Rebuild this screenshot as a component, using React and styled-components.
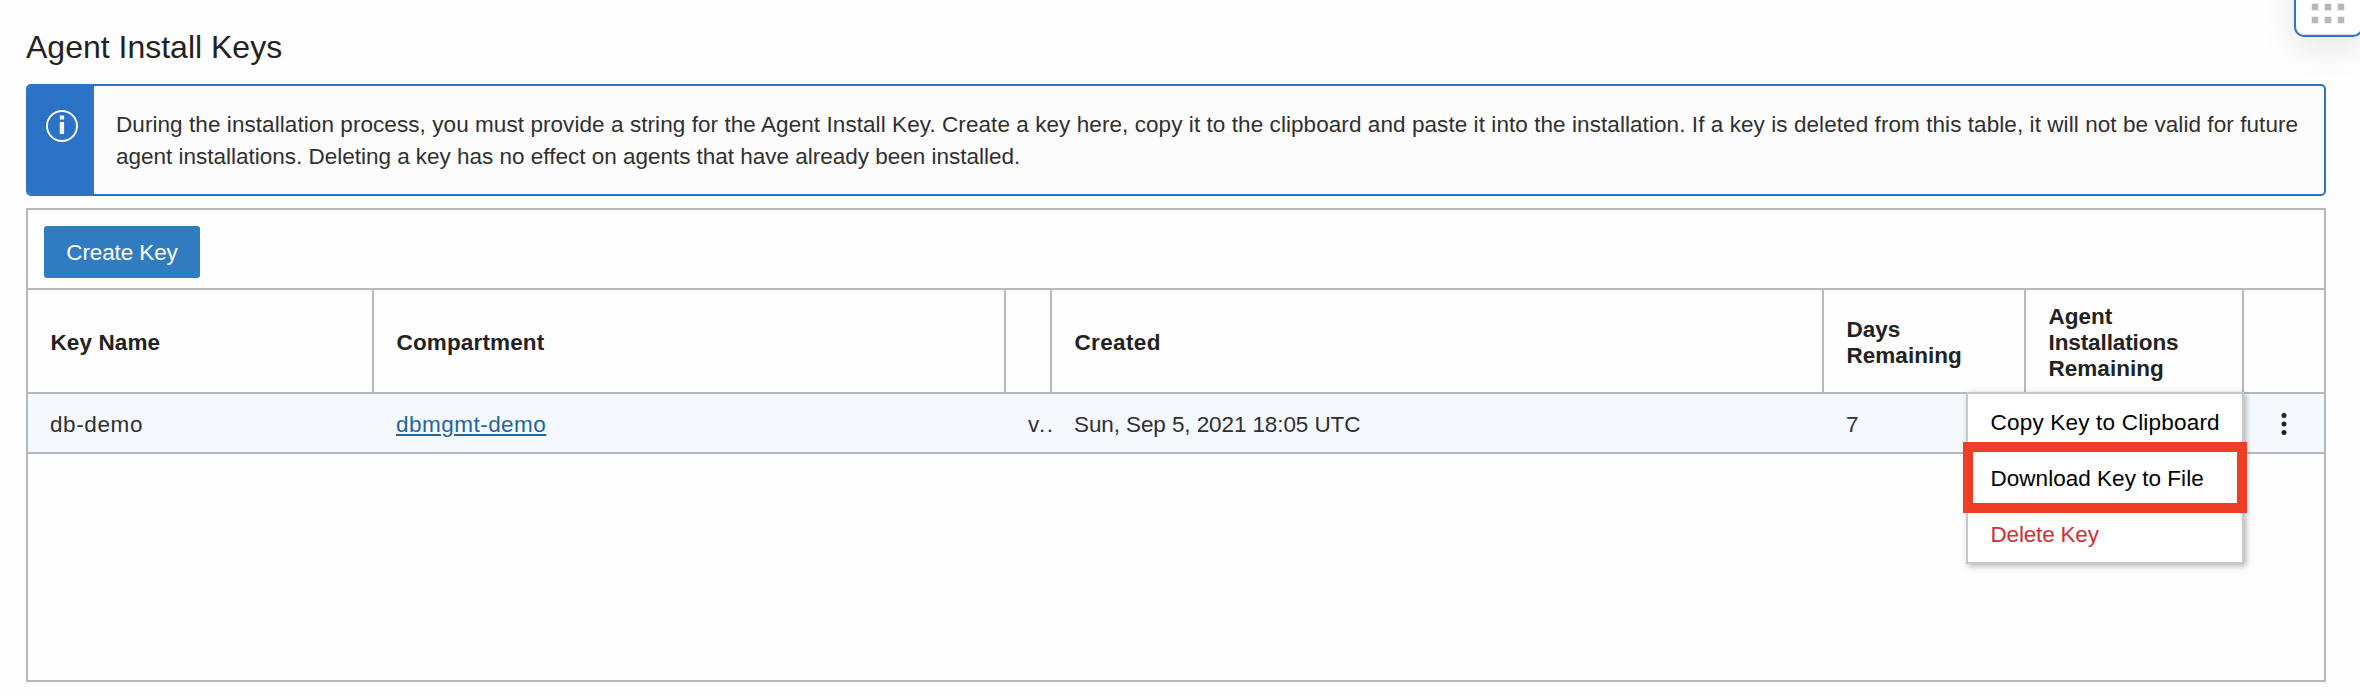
import React from "react";
import styled, { createGlobalStyle } from "styled-components";

const colors = {
  line: "#b4b9c0",
  info: "#2c72c7",
  button: "#317cc1",
  heading: "#222222",
  text: "#303030",
  link: "#2464a0",
  danger: "#d12f33",
  highlight: "#ee3e25",
};

const COLUMNS = "346px 632px 46px 772px 202px 218px 80px";

const GlobalStyle = createGlobalStyle`
  * { box-sizing: border-box; }
  body {
    margin: 0;
    background: #fefefe;
    color: ${colors.text};
    font: 22.5px/32px "Liberation Sans", Arial, sans-serif;
    overflow: hidden;
  }
`;

const Page = styled.main`
  position: relative;
  width: 2360px;
  height: 698px;
  padding: 27px 34px 0 26px;
  overflow: hidden;
`;

const Title = styled.h1`
  margin: 0 0 17px;
  color: ${colors.heading};
  font-size: 32px;
  font-weight: 400;
  line-height: 40px;
`;

const Track = styled.span`
  letter-spacing: ${(p) => p.$spacing || 0}px;
  white-space: nowrap;
`;

const Banner = styled.section`
  display: flex;
  height: 112px;
  margin-bottom: 12px;
  border: 2px solid ${colors.info};
  border-radius: 5px;
  background: #fcfcfc;
  overflow: hidden;
`;

const BannerIcon = styled.div`
  display: flex;
  flex: 0 0 66px;
  justify-content: center;
  padding: 24px 0 0 2px;
  background: ${colors.info};

  svg {
    display: block;
    width: 32px;
    height: 32px;
  }
`;

const BannerText = styled.p`
  display: flex;
  flex-direction: column;
  margin: 0;
  padding: 23px 0 0 22px;
`;

const Panel = styled.section`
  height: 474px;
  border: 2px solid ${colors.line};
`;

const Toolbar = styled.div`
  display: flex;
  height: 80px;
  padding: 16px;
  border-bottom: 2px solid ${colors.line};
`;

const PrimaryButton = styled.button`
  width: 156px;
  height: 52px;
  padding: 1px 0 0;
  border: 0;
  border-radius: 3px;
  background: ${colors.button};
  color: #fff;
  font: inherit;
`;

const HeaderRow = styled.div`
  display: grid;
  grid-template-columns: ${COLUMNS};
  height: 104px;
  border-bottom: 2px solid ${colors.line};
`;

const HeaderCell = styled.div`
  display: flex;
  flex-direction: column;
  justify-content: center;
  padding: 3px 0 0 22.5px;
  border-right: 2px solid ${colors.line};
  color: ${colors.heading};
  font-weight: 700;
  line-height: 26px;

  &:last-child {
    border-right: 0;
  }
`;

const BodyRow = styled.div`
  display: grid;
  grid-template-columns: ${COLUMNS};
  height: 60px;
  border-bottom: 2px solid ${colors.line};
  background: #f5f9fe;
`;

const Cell = styled.div`
  display: flex;
  align-items: center;
  padding: 3px 0 0 22px;
`;

const CompartmentLink = styled.a`
  color: ${colors.link};
  letter-spacing: 0.48px;
  text-decoration: underline;
  text-decoration-thickness: 2px;
  text-underline-offset: 2px;
`;

const ActionsCell = styled.div`
  position: relative;
  display: flex;
  align-items: center;
  justify-content: center;
`;

const KebabButton = styled.button`
  display: flex;
  padding: 2px 0 0;
  border: 0;
  background: none;
`;

const Menu = styled.ul`
  position: absolute;
  top: -2px;
  right: 80px;
  z-index: 1;
  width: 278px;
  margin: 0;
  padding: 0;
  border: 2px solid #c8c8c8;
  background: #fff;
  box-shadow: 2px 2px 6px rgba(0, 0, 0, 0.3);
  list-style: none;
`;

const MenuItem = styled.li`
  position: relative;
  display: flex;
  align-items: center;
  height: 56px;
  padding: 2px 0 0 22.5px;
  color: ${(p) => (p.$danger ? colors.danger : "#000")};
`;

const Highlight = styled.div`
  position: absolute;
  top: -8px;
  left: -5px;
  width: 284px;
  height: 71px;
  border: 10px solid ${colors.highlight};
  z-index: 1;
`;

const HelpLauncher = styled.div`
  position: absolute;
  top: -32px;
  right: -3px;
  display: grid;
  grid-template-columns: repeat(3, 6px);
  grid-auto-rows: 6px;
  align-content: end;
  gap: 7px;
  width: 69px;
  height: 69px;
  padding: 0 0 12px 16px;
  border: 2px solid ${colors.info};
  border-radius: 10px;
  background: #fff;
  box-shadow: 0 10px 34px rgba(0, 0, 0, 0.1), inset 0 -1px 0 #dde1e6;
`;

const GridDot = styled.span`
  background: #b4b9c0;
  box-shadow: 0 0 0 0.5px #d5d8dc;
`;

const headers = [
  [["Key Name", 0.1]],
  [["Compartment", 0.15]],
  [],
  [["Created", 0.35]],
  [["Days", 0], ["Remaining", 0.03]],
  [["Agent", 0], ["Installations", -0.1], ["Remaining", 0.03]],
  [],
];

const InfoIcon = () => (
  <svg viewBox="0 0 32 32" fill="none">
    <circle cx="16" cy="16" r="15" stroke="#fff" strokeWidth="1.9" />
    <path d="M13.8 5.6h4.3v4h-4.3zM13.8 12h4.3v12h-4.3z" fill="#fff" />
  </svg>
);

const KebabIcon = () => (
  <svg width="8" height="24" viewBox="0 0 8 24" fill="#222">
    <circle cx="4" cy="3.4" r="2.5" />
    <circle cx="4" cy="12" r="2.5" />
    <circle cx="4" cy="20.5" r="2.5" />
  </svg>
);

export default function App() {
  return (
    <Page>
      <GlobalStyle />
      <HelpLauncher>
        {[0, 1, 2, 3, 4, 5].map((n) => (
          <GridDot key={n} />
        ))}
      </HelpLauncher>

      <Title>Agent Install Keys</Title>

      <Banner>
        <BannerIcon>
          <InfoIcon />
        </BannerIcon>
        <BannerText>
          <Track $spacing={0.07}>
            During the installation process, you must provide a string for the Agent Install Key. Create a key here, copy it to the clipboard and paste it into the installation. If a key is deleted from this table, it will not be valid for future
          </Track>
          <Track $spacing={-0.01}>
            agent installations. Deleting a key has no effect on agents that have already been installed.
          </Track>
        </BannerText>
      </Banner>

      <Panel>
        <Toolbar>
          <PrimaryButton>
            <Track $spacing={-0.12}>Create Key</Track>
          </PrimaryButton>
        </Toolbar>

        <HeaderRow>
          {headers.map((lines, i) => (
            <HeaderCell key={i}>
              {lines.map(([label, spacing]) => (
                <Track key={label} $spacing={spacing}>{label}</Track>
              ))}
            </HeaderCell>
          ))}
        </HeaderRow>

        <BodyRow>
          <Cell><Track $spacing={0.6}>db-demo</Track></Cell>
          <Cell><CompartmentLink href="#">dbmgmt-demo</CompartmentLink></Cell>
          <Cell><Track $spacing={1.5}>v..</Track></Cell>
          <Cell><Track $spacing={-0.1}>Sun, Sep 5, 2021 18:05 UTC</Track></Cell>
          <Cell>7</Cell>
          <Cell />
          <ActionsCell>
            <Menu>
              <MenuItem><Track $spacing={0.2}>Copy Key to Clipboard</Track></MenuItem>
              <MenuItem>
                <Highlight />
                <Track $spacing={0.03}>Download Key to File</Track>
              </MenuItem>
              <MenuItem $danger><Track $spacing={-0.18}>Delete Key</Track></MenuItem>
            </Menu>
            <KebabButton aria-label="Actions">
              <KebabIcon />
            </KebabButton>
          </ActionsCell>
        </BodyRow>
      </Panel>
    </Page>
  );
}
